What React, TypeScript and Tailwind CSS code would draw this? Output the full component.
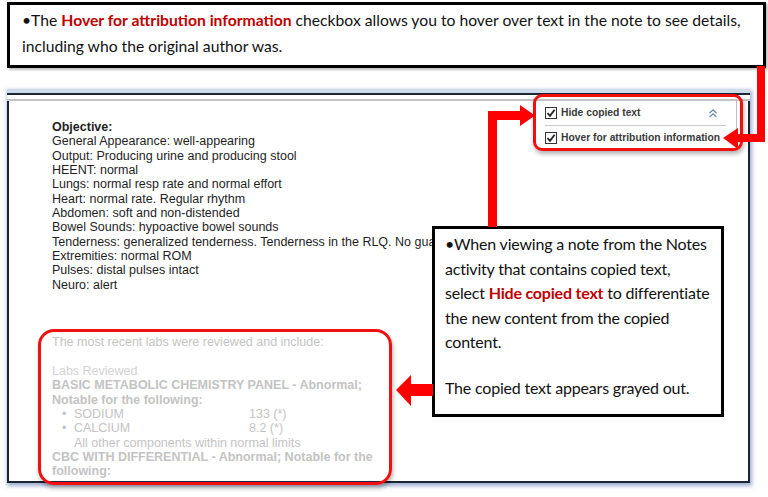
import React from "react";

function Check() {
  return (
    <svg width="12" height="12" viewBox="0 0 12 12" className="shrink-0">
      <rect x="0.5" y="0.5" width="11" height="11" fill="#fff" stroke="#333" />
      <path d="M2.5 6.2 L5 8.8 L9.6 2.8" fill="none" stroke="#222" strokeWidth="1.8" />
    </svg>
  );
}

function Arrows() {
  return (
    <svg className="absolute inset-0 pointer-events-none" width="768" height="497" viewBox="0 0 768 497">
      <g fill="#ff0000">
        {/* from top callout down to hover checkbox */}
        <rect x="757" y="66" width="8" height="76" />
        <rect x="736" y="134" width="29" height="8" />
        <polygon points="723,138 738,128 738,149" />
        {/* from lower callout up to hide copied text */}
        <rect x="488" y="111" width="9" height="116" />
        <rect x="488" y="111" width="34" height="9" />
        <polygon points="535,115.5 520,105 520,126" />
        {/* pointing left at grayed text */}
        <rect x="409" y="384" width="24" height="12" />
        <polygon points="396,390 411,375 411,406" />
      </g>
    </svg>
  );
}

const objective = [
  "General Appearance: well-appearing",
  "Output: Producing urine and producing stool",
  "HEENT: normal",
  "Lungs: normal resp rate and normal effort",
  "Heart: normal rate. Regular rhythm",
  "Abdomen: soft and non-distended",
  "Bowel Sounds: hypoactive bowel sounds",
  "Tenderness: generalized tenderness. Tenderness in the RLQ. No guarding.",
  "Extremities: normal ROM",
  "Pulses: distal pulses intact",
  "Neuro: alert",
];

export default function App() {
  return (
    <div className="relative w-[768px] h-[497px] bg-white overflow-hidden">
      {/* top callout */}
      <div className="pt-[2px] pl-[7px]">
        <div className="w-[759px] h-[66px] border-[3px] border-black bg-white pl-[12px] pt-[2px] text-[15.7px] leading-[26px] text-[#111] shadow-[2px_2px_2px_rgba(0,0,0,0.25)] [font-family:Lato,'Open_Sans',sans-serif]">
          •The <span className="font-bold text-[#c00000]">Hover for attribution information</span> checkbox allows you to hover over text in the note to see details,
          <br />
          including who the original author was.
        </div>
      </div>

      {/* note panel */}
      <div className="ml-[7px] mt-[21px] w-[743px] h-[394px] flex flex-col shadow-[1px_2px_4px_1px_rgba(80,110,170,0.55)]">
        <div className="h-[4px] bg-[#cddbeb]" />
        <div className="h-[2px] bg-[#1c2535]" />
        <div className="h-[4px] bg-white" />
        <div className="h-[2px] bg-[#c4c4c4]" />
        <div className="flex-1 min-h-0 overflow-hidden border-x-2 border-b-2 border-[#1c2535] bg-white pl-[43px] pt-[19px] text-[12.5px] leading-[14.35px] [font-family:'Liberation_Sans',Arial,sans-serif]">
          <div className="text-[#1e1e1e]">
            <p className="font-bold">Objective:</p>
            {objective.map((l) => (
              <p key={l} className="whitespace-nowrap">{l}</p>
            ))}
          </div>
          <div className="mt-[43px] text-[#c3c3c3]">
            <p>The most recent labs were reviewed and include:</p>
            <p className="mt-[14.35px] text-[#d2d2d2]">Labs Reviewed</p>
            <p className="font-bold">BASIC METABOLIC CHEMISTRY PANEL - Abnormal;</p>
            <p className="font-bold">Notable for the following:</p>
            <div className="grid grid-cols-[22px_175px_auto]">
              <span className="pl-[10px]">•</span>
              <span>SODIUM</span>
              <span>133 (*)</span>
              <span className="pl-[10px]">•</span>
              <span>CALCIUM</span>
              <span>8.2 (*)</span>
            </div>
            <p className="pl-[22px]">All other components within normal limits</p>
            <p className="font-bold">CBC WITH DIFFERENTIAL - Abnormal; Notable for the</p>
            <p className="font-bold">following:</p>
          </div>
        </div>
      </div>

      {/* checkbox popup */}
      <div className="absolute left-[537px] top-[101px] w-[200px] h-[49px] bg-white border-r border-[#bcbcbc] flex flex-col px-[8px] text-[10.3px] font-bold text-[#3a3a3a] [font-family:'Liberation_Sans',Arial,sans-serif]">
        <div className="h-[24px] flex items-center gap-[4px]">
          <Check />
          <span>Hide copied text</span>
          <svg width="10" height="10" viewBox="0 0 10 10" className="ml-auto mr-[10px]">
            <path d="M1.5 5 L5 2 L8.5 5 M1.5 9 L5 6 L8.5 9" fill="none" stroke="#6f8faf" strokeWidth="1.4" />
          </svg>
        </div>
        <div className="h-px bg-[#c8c8c8] mr-[2px]" />
        <div className="h-[24px] flex items-center gap-[4px]">
          <Check />
          <span className="whitespace-nowrap">Hover for attribution information</span>
        </div>
      </div>

      {/* highlight rings */}
      <div className="absolute left-[533px] top-[94px] w-[210px] h-[57px] rounded-[9px] border-[3px] border-[#f01010] shadow-[1px_3px_4px_rgba(0,0,0,0.3)]" />
      <div className="absolute left-[38px] top-[329px] w-[354px] h-[156px] rounded-[16px] border-[3px] border-[#f01010] shadow-[1px_3px_4px_rgba(0,0,0,0.3)]" />

      {/* lower callout */}
      <div className="absolute left-[432px] top-[226px] w-[292px] h-[191px] border-[3px] border-black bg-white pl-[10px] pt-[3px] text-[16px] leading-[24.5px] text-[#111] [font-family:Lato,'Open_Sans',sans-serif] tracking-[-0.2px]">
        <p>
          •When viewing a note from the Notes
          <br />
          activity that contains copied text,
          <br />
          select <span className="font-bold text-[#c00000]">Hide copied text</span> to differentiate
          <br />
          the new content from the copied
          <br />
          content.
        </p>
        <p className="mt-[21px]">The copied text appears grayed out.</p>
      </div>

      <Arrows />
    </div>
  );
}
